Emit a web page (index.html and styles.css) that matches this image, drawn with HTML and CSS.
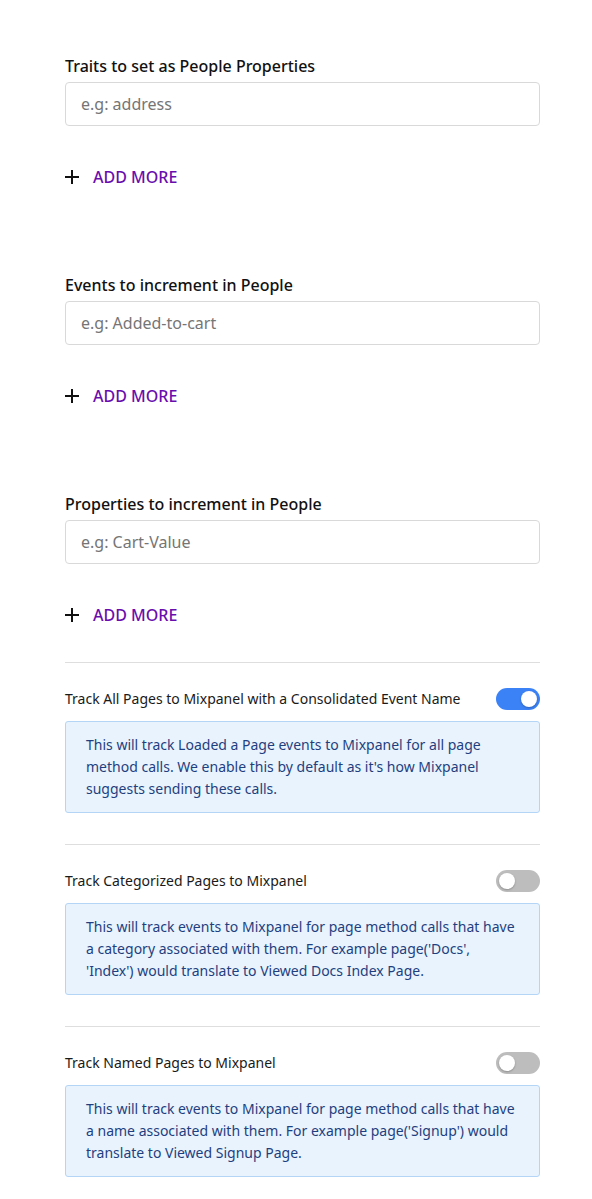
FILE: index.html
```html
<!DOCTYPE html>
<html>
<head>
<meta charset="utf-8">
<link rel="stylesheet" href="styles.css">
</head>
<body>
<div class="page">
  <div class="field">
    <div class="field-label">Traits to set as People Properties</div>
    <div class="input"><span class="placeholder">e.g: address</span></div>
    <div class="add-more">
      <svg class="plus" width="14" height="14" viewBox="0 0 14 14"><path d="M7 0v14M0 7h14" stroke="#111" stroke-width="2"/></svg>
      <span>ADD MORE</span>
    </div>
  </div>
  <div class="field">
    <div class="field-label">Events to increment in People</div>
    <div class="input"><span class="placeholder">e.g: Added-to-cart</span></div>
    <div class="add-more">
      <svg class="plus" width="14" height="14" viewBox="0 0 14 14"><path d="M7 0v14M0 7h14" stroke="#111" stroke-width="2"/></svg>
      <span>ADD MORE</span>
    </div>
  </div>
  <div class="field last">
    <div class="field-label">Properties to increment in People</div>
    <div class="input"><span class="placeholder">e.g: Cart-Value</span></div>
    <div class="add-more">
      <svg class="plus" width="14" height="14" viewBox="0 0 14 14"><path d="M7 0v14M0 7h14" stroke="#111" stroke-width="2"/></svg>
      <span>ADD MORE</span>
    </div>
  </div>

  <div class="toggle-section">
    <div class="toggle-row">
      <span class="toggle-label">Track All Pages to Mixpanel with a Consolidated Event Name</span>
      <span class="switch on"><span class="knob"></span></span>
    </div>
    <div class="info">This will track Loaded a Page events to Mixpanel for all page method calls. We enable this by default as it's how Mixpanel suggests sending these calls.</div>
  </div>
  <div class="toggle-section">
    <div class="toggle-row">
      <span class="toggle-label">Track Categorized Pages to Mixpanel</span>
      <span class="switch"><span class="knob"></span></span>
    </div>
    <div class="info">This will track events to Mixpanel for page method calls that have a category associated with them. For example page('Docs', 'Index') would translate to Viewed Docs Index Page.</div>
  </div>
  <div class="toggle-section">
    <div class="toggle-row">
      <span class="toggle-label">Track Named Pages to Mixpanel</span>
      <span class="switch"><span class="knob"></span></span>
    </div>
    <div class="info">This will track events to Mixpanel for page method calls that have a name associated with them. For example page('Signup') would translate to Viewed Signup Page.</div>
  </div>
</div>
</body>
</html>
```
FILE: styles.css
```css
* { box-sizing: border-box; }
body {
  margin: 0;
  background: #fff;
  font-family: "Noto Sans", "Open Sans", sans-serif;
  color: #1a1a1a;
}
.page {
  width: 475px;
  margin-left: 65px;
  padding-top: 54px;
}
.field {
  display: flex;
  flex-direction: column;
  padding-bottom: 84px;
}
.field.last { padding-bottom: 35px; }
.field-label {
  font-size: 16px;
  line-height: 24px;
  font-weight: 500;
  color: #111;
}
.input {
  margin-top: 4px;
  height: 44px;
  border: 1px solid #d9d9d9;
  border-radius: 4px;
  padding: 0 15px;
  display: flex;
  align-items: center;
}
.placeholder {
  font-size: 16px;
  color: #757575;
}
.add-more {
  margin-top: 39px;
  height: 24px;
  display: flex;
  align-items: center;
  gap: 14px;
  color: #6a0dad;
  font-size: 16px;
  font-weight: 500;
}
.plus { flex: none; }
.toggle-section {
  border-top: 1px solid #dedede;
  padding: 25px 0 31px;
}
.toggle-row {
  display: flex;
  align-items: center;
  justify-content: space-between;
  height: 22px;
}
.toggle-label {
  font-size: 14px;
  line-height: 22px;
  color: #1a1a1a;
}
.switch {
  width: 44px;
  height: 22px;
  border-radius: 11px;
  background: #bdbdbd;
  position: relative;
  flex: none;
}
.switch .knob {
  position: absolute;
  top: 3px;
  left: 3px;
  width: 16px;
  height: 16px;
  border-radius: 50%;
  background: #fff;
  box-shadow: 0 1px 2px rgba(0,0,0,0.25);
}
.switch.on { background: #3b82f6; }
.switch.on .knob { left: 25px; }
.info {
  margin-top: 11px;
  background: #e8f3fd;
  border: 1px solid #b4d5f6;
  border-radius: 3px;
  padding: 12px 20px;
  font-size: 14px;
  line-height: 22px;
  color: #1f3f7f;
}
```
